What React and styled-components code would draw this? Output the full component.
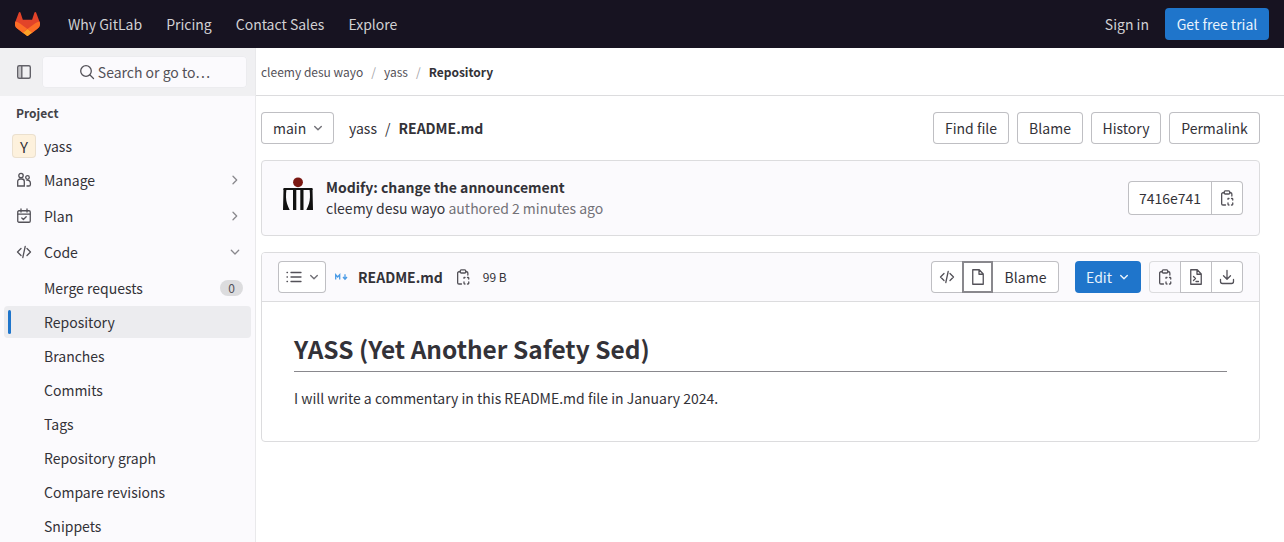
import React from "react";
import styled, { createGlobalStyle } from "styled-components";

const Global = createGlobalStyle`
  html, body { margin: 0; padding: 0; height: 100%; overflow: hidden; background: #fff; }
  * { box-sizing: border-box; }
  body { font-family: "Noto Sans CJK JP", "Noto Sans", sans-serif; font-size: 14px; color: #333238; }
`;

const Page = styled.div`
  width: 1284px; height: 542px; overflow: hidden; display: flex; flex-direction: column;
`;
const TopBar = styled.header`
  height: 48px; flex: none; background: #171321; display: flex; align-items: center; padding: 0 15px 0 15px;
`;
const Logo = styled.svg`width: 25px; height: 24px; flex: none; margin-right: 16px;`;
const TopLink = styled.a`
  color: #d1d0d3; font-size: 14px; padding: 0 12px; line-height: 47px; white-space: nowrap;
`;
const SignIn = styled(TopLink)`padding: 0 4px 0 0;`;
const Spacer = styled.div`flex: 1;`;
const Trial = styled.a`
  height: 32px; width: 104px; margin-left: 12px; background: #1f75cb; color: #e9f3fc; border-radius: 4px; font-size: 14px;
  display: flex; align-items: center; justify-content: center; padding-bottom: 1px;
`;
const Body = styled.div`flex: 1; display: flex; min-height: 0;`;
const Sidebar = styled.aside`
  width: 256px; flex: none; background: #fbfafd; border-right: 1px solid #e9e9eb; display: flex; flex-direction: column;
`;
const SideTop = styled.div`
  height: 48px; flex: none; background: #f0f0f2; display: flex; align-items: center; padding: 0 8px 0 16px; gap: 10px;
`;
const SideToggle = styled.svg`width: 16px; height: 16px; color: #626168; flex: none;`;
const Search = styled.div`
  width: 205px; height: 32px; background: #fbfafd; border-radius: 4px; box-shadow: inset 0 0 0 1px #ececef; display: flex; align-items: center; justify-content: center; gap: 3px;
  font-size: 14px; color: #535158; padding-bottom: 1px;
`;
const Nav = styled.nav`flex: 1; display: flex; flex-direction: column; padding: 8px 4px 0;`;
const NavTitle = styled.div`
  font-size: 12px; font-weight: 700; color: #434248; padding-left: 12px; height: 20px; line-height: 18px; margin-bottom: 5px;
`;
const NavRow = styled.div`
  position: relative; height: 32px; flex: none; display: flex; align-items: center; padding: 0 8px 1px 40px; font-size: 14px; color: #333238;
  border-radius: 4px; margin-top: ${p => p.$gap || 2}px;
  background: ${p => p.$active ? "#ececef" : "transparent"};
  ${p => p.$active && `&::before { content: ""; position: absolute; left: 4px; top: 4px; bottom: 4px; width: 3px; background: #1f75cb; border-radius: 2px; }`}
`;
const NavIcon = styled.svg`position: absolute; left: 12px; top: 8px; width: 16px; height: 16px; color: #535158;`;
const AvatarY = styled.span`
  position: absolute; left: 8px; top: 4px; width: 24px; height: 24px; background: #fdf1dd; border-radius: 4px; box-shadow: inset 0 0 0 1px rgba(31,30,36,.08);
  display: flex; align-items: center; justify-content: center; font-size: 15px; color: #333238;
`;
const Chevron = styled.svg`margin-left: auto; width: 16px; height: 16px; color: #89888d; flex: none; stroke-width: 1.3;`;
const Caret = styled.svg`width: 12px; height: 12px; color: ${p => p.$c || "#737278"}; flex: none;`;
const Count = styled.span`
  margin-left: auto; width: 23px; height: 16px; background: #dcdcde; border-radius: 8px; display: flex; align-items: center; justify-content: center; font-size: 12px; color: #535158;
`;
const Main = styled.main`flex: 1; min-width: 0; display: flex; flex-direction: column;`;
const Crumbs = styled.div`
  height: 48px; flex: none; border-bottom: 1px solid #dcdcde; display: flex; align-items: center; padding-left: 5px; font-size: 12px; color: #535158;
`;
const Sep = styled.span`color: #a4a3a8; margin: 0 8px;`;
const CrumbNow = styled.b`color: #333238; font-weight: 700;`;
const Content = styled.div`padding: 16px 24px 0 5px; display: flex; flex-direction: column;`;
const Toolbar = styled.div`display: flex; align-items: center; height: 32px; margin-bottom: 16px;`;
const Btn = styled.button`
  height: 32px; width: ${p => p.$w ? `${p.$w}px` : "auto"}; padding: 0 0 1px; background: #fff; border: 0; border-radius: 4px; box-shadow: inset 0 0 0 1px #bfbfc3;
  font: inherit; font-size: 14px; color: #333238; display: flex; align-items: center; justify-content: center; white-space: nowrap; gap: 4px;
`;
const BranchBtn = styled(Btn)`width: 73px; gap: 6px; padding-left: 12px; justify-content: flex-start;`;
const BtnRow = styled.div`margin-left: auto; display: flex; gap: 8px;`;
const Path = styled.div`margin-left: 15px; font-size: 14px; display: flex; gap: 8px; color: #333238; padding-bottom: 1px;`;
const Bold = styled.b`font-weight: 700;`;
const CommitCard = styled.section`
  height: 76px; background: #fbfafd; border: 1px solid #dcdcde; border-radius: 4px; display: flex; align-items: center; padding: 0 16px 0 20px; margin-bottom: 16px;
`;
const Avatar = styled.svg`width: 32px; height: 36px; flex: none; margin-right: 12px; overflow: visible;`;
const CommitText = styled.div`display: flex; flex-direction: column; font-size: 14px; line-height: 21px;`;
const Muted = styled.span`color: #737278;`;
const Group = styled.div`margin-left: ${p => p.$ml || "0"}; display: flex; height: ${p => p.$h || 32}px;`;
const GroupBtn = styled.button`
  width: ${p => p.$w}px; height: 100%; padding: 0 0 1px; margin-left: -1px; border: 0; font: inherit; font-size: 14px; color: #333238;
  display: flex; align-items: center; justify-content: center;
  background: ${p => p.$soft ? "#fbfafd" : "#fff"};
  box-shadow: inset 0 0 0 ${p => p.$on ? 2 : 1}px ${p => p.$on ? "#89888d" : p.$soft ? "#dcdcde" : "#bfbfc3"};
  position: relative; z-index: ${p => p.$on ? 1 : 0};
  &:first-child { margin-left: 0; border-radius: 4px 0 0 4px; }
  &:last-child { border-radius: 0 4px 4px 0; }
`;
const Icon = styled.svg`width: 16px; height: 16px; color: #535158; flex: none;`;
const FileCard = styled.section`border: 1px solid #dcdcde; border-radius: 4px; overflow: hidden;`;
const FileHead = styled.div`
  height: 49px; background: #fbfafd; border-bottom: 1px solid #dcdcde; display: flex; align-items: center; padding: 0 16px;
`;
const TocBtn = styled(Btn)`width: 48px; padding: 0 0 0 8px; gap: 6px; margin-right: 9px; justify-content: flex-start;`;
const MdIcon = styled.svg`width: 13px; height: 8px; flex: none; margin-right: 10px;`;
const FileName = styled.b`font-size: 14px; font-weight: 700; margin-right: 12px; padding-bottom: 1px;`;
const Size = styled.span`font-size: 12px; margin-left: 12px; color: #333238; padding-bottom: 1px;`;
const Edit = styled.button`
  width: 66px; height: 32px; margin-left: 16px; border: 0; border-radius: 4px; background: #1f75cb; color: #e9f3fc; font: inherit; font-size: 14px;
  display: flex; align-items: center; justify-content: center; gap: 6px; padding: 0 0 1px;
`;
const Markdown = styled.article`padding: 32px 32px 24px; height: 139px;`;
const Title = styled.h1`
  margin: 0 0 16px; font-size: 24.45px; line-height: 30px; font-weight: 700; color: #333238; border-bottom: 1px solid #89888d; height: 38px;
`;
const Para = styled.p`margin: 0; font-size: 14px; line-height: 21px; color: #333238;`;

const Right = () => <Chevron viewBox="0 0 16 16" fill="none" stroke="currentColor" strokeLinecap="round" strokeLinejoin="round"><path d="M6 4.300l3.700 3.700L6 11.700"/></Chevron>;
const Open = () => <Chevron viewBox="0 0 16 16" fill="none" stroke="currentColor" strokeLinecap="round" strokeLinejoin="round"><path d="M4.300 6.300L8 10l3.700-3.700"/></Chevron>;
const Down = ({ c }) => <Caret $c={c} viewBox="0 0 12 12" fill="none" stroke="currentColor" strokeWidth="1.4" strokeLinecap="round" strokeLinejoin="round"><path d="M2.700 4.500L6 7.800l3.300-3.300"/></Caret>;
const CodeGlyph = () => <path d="M5 4.500L1.500 8 5 11.500M11 4.500L14.500 8 11 11.500M9.200 2.500l-2.400 11"/>;
const Clip = () => (
  <Icon viewBox="0 0 16 16" fill="none" stroke="currentColor" strokeWidth="1.3" strokeLinecap="round" strokeLinejoin="round">
    <path d="M5 2.750H3.900A1.250 1.250 0 0 0 2.650 4v9.750A1.250 1.250 0 0 0 3.900 15h2.600M11 2.750h.6A1.250 1.250 0 0 1 12.850 4v2"/>
    <rect x="5.250" y=".8" width="5.500" height="3.200" rx="1"/>
    <path d="M9 9.250V8.500h1M12.500 8.500h.5a.750.750 0 0 1 .750.750v.750M13.750 13v1.250a.750.750 0 0 1-.750.750h-.500M10 15h-.250a.750.750 0 0 1-.750-.750V13"/>
  </Icon>
);

export default function App() {
  return (
    <Page>
      <Global/>
      <TopBar>
        <Logo viewBox="0 0 25 24">
          <path d="m24.507 9.5-.034-.09L21.082.562a.896.896 0 0 0-1.694.091l-2.29 7.01H7.825L5.535.653a.898.898 0 0 0-1.694-.09L.451 9.411.416 9.5a6.297 6.297 0 0 0 2.09 7.278l.012.01.03.022 5.16 3.867 2.56 1.935 1.554 1.176a1.051 1.051 0 0 0 1.268 0l1.555-1.176 2.56-1.935 5.197-3.89.014-.01A6.297 6.297 0 0 0 24.507 9.5Z" fill="#E24329"/>
          <path d="m24.507 9.5-.034-.09a11.44 11.44 0 0 0-4.56 2.051l-7.447 5.632 4.742 3.584 5.197-3.89.014-.01A6.297 6.297 0 0 0 24.507 9.5Z" fill="#FC6D26"/>
          <path d="m7.707 20.677 2.56 1.935 1.555 1.176a1.051 1.051 0 0 0 1.268 0l1.555-1.176 2.56-1.935-4.743-3.584-4.755 3.584Z" fill="#FCA326"/>
          <path d="M5.01 11.461a11.43 11.43 0 0 0-4.56-2.05l-.034.088a6.297 6.297 0 0 0 2.09 7.278l.012.01.03.022 5.16 3.867 4.745-3.584-7.444-5.632Z" fill="#FC6D26"/>
        </Logo>
        <TopLink>Why GitLab</TopLink>
        <TopLink>Pricing</TopLink>
        <TopLink>Contact Sales</TopLink>
        <TopLink>Explore</TopLink>
        <Spacer/>
        <SignIn>Sign in</SignIn>
        <Trial>Get free trial</Trial>
      </TopBar>
      <Body>
        <Sidebar>
          <SideTop>
            <SideToggle viewBox="0 0 16 16" fill="none" stroke="currentColor" strokeWidth="1.4">
              <path d="M4 2.500v11" strokeWidth="3" opacity=".3"/>
              <rect x="1.700" y="1.700" width="12.600" height="12.600" rx="1.500"/><path d="M5.800 2v12"/>
            </SideToggle>
            <Search>
              <Icon viewBox="0 0 16 16" fill="none" stroke="currentColor" strokeWidth="1.3" strokeLinecap="round"><circle cx="7" cy="7" r="5.300"/><path d="M11 11l3.500 3.500"/></Icon>
              Search or go to…
            </Search>
          </SideTop>
          <Nav>
            <NavTitle>Project</NavTitle>
            <NavRow $gap={1}><AvatarY>Y</AvatarY>yass</NavRow>
            <NavRow>
              <NavIcon viewBox="0 0 16 16" fill="none" stroke="currentColor" strokeWidth="1.3"><circle cx="5" cy="3.500" r="2.200"/><path d="M1.700 14V9.500A2.500 2.500 0 0 1 4.200 7h1.600a2.500 2.500 0 0 1 2.500 2.500V14z"/><circle cx="11.500" cy="5.500" r="1.800"/><path d="M10.500 14h2.300a1.600 1.600 0 0 0 1.600-1.600V11a2.800 2.800 0 0 0-4-2.500"/></NavIcon>
              Manage<Right/>
            </NavRow>
            <NavRow $gap={4}>
              <NavIcon viewBox="0 0 16 16" fill="none" stroke="currentColor" strokeWidth="1.3" strokeLinecap="round" strokeLinejoin="round"><rect x="1.750" y="2.750" width="12.500" height="11.500" rx="1.200"/><path d="M5 1v3M11 1v3M2 6.200h12M5.800 10l1.600 1.500 2.800-2.800"/></NavIcon>
              Plan<Right/>
            </NavRow>
            <NavRow $gap={4}>
              <NavIcon viewBox="0 0 16 16" fill="none" stroke="currentColor" strokeWidth="1.3" strokeLinecap="round" strokeLinejoin="round"><CodeGlyph/></NavIcon>
              Code<Open/>
            </NavRow>
            <NavRow $gap={4}>Merge requests<Count>0</Count></NavRow>
            <NavRow $active>Repository</NavRow>
            <NavRow>Branches</NavRow>
            <NavRow>Commits</NavRow>
            <NavRow>Tags</NavRow>
            <NavRow>Repository graph</NavRow>
            <NavRow>Compare revisions</NavRow>
            <NavRow>Snippets</NavRow>
          </Nav>
        </Sidebar>
        <Main>
          <Crumbs>
            cleemy desu wayo<Sep>/</Sep>yass<Sep>/</Sep><CrumbNow>Repository</CrumbNow>
          </Crumbs>
          <Content>
            <Toolbar>
              <BranchBtn>main <Down/></BranchBtn>
              <Path>yass <span>/</span> <Bold>README.md</Bold></Path>
              <BtnRow>
                <Btn $w={76}>Find file</Btn>
                <Btn $w={66}>Blame</Btn>
                <Btn $w={70}>History</Btn>
                <Btn $w={91}>Permalink</Btn>
              </BtnRow>
            </Toolbar>
            <CommitCard>
              <Avatar viewBox="0 0 32 36">
                <circle cx="16" cy="2.300" r="4.900" fill="#7a1712"/>
                <path d="M1.500 8h29v2h-29z" fill="#111"/>
                <path d="M1.500 9h3c-.8 6-.6 11 .5 14.500.7 2.400 1.600 4.300 2.700 6.500H1z" fill="#111"/>
                <path d="M30.500 9h-3c.8 6 .6 11-.5 14.500-.7 2.400-1.600 4.300-2.700 6.500H31z" fill="#111"/>
                <path d="M11 10h3.300v20H11zM18.300 10h3.200v20h-3.200z" fill="#111"/>
              </Avatar>
              <CommitText>
                <Bold>Modify: change the announcement</Bold>
                <span>cleemy desu wayo <Muted>authored 2 minutes ago</Muted></span>
              </CommitText>
              <Group $ml="auto" $h={34}>
                <GroupBtn $w={84}>7416e741</GroupBtn>
                <GroupBtn $w={32}><Clip/></GroupBtn>
              </Group>
            </CommitCard>
            <FileCard>
              <FileHead>
                <TocBtn>
                  <Icon viewBox="0 0 16 16" fill="none" stroke="currentColor" strokeWidth="1.3" strokeLinecap="round"><path d="M5 3.500h10M5 8h10M5 12.500h10M1 3.500h.5M1 8h.5M1 12.500h.5"/></Icon>
                  <Down/>
                </TocBtn>
                <MdIcon viewBox="0 0 13 8" fill="none" stroke="#4a9be6" strokeWidth="1.300"><path d="M.7 6.500V1.800l2 2.200 2-2.200v4.700"/><path d="M10 1.300v4.700M8 4l2 2.200L12 4"/></MdIcon>
                <FileName>README.md</FileName>
                <Clip/>
                <Size>99 B</Size>
                <Group $ml="auto">
                  <GroupBtn $w={32}><Icon viewBox="0 0 16 16" fill="none" stroke="currentColor" strokeWidth="1.3" strokeLinecap="round" strokeLinejoin="round"><CodeGlyph/></Icon></GroupBtn>
                  <GroupBtn $w={31} $on><Icon viewBox="0 0 16 16" fill="none" stroke="currentColor" strokeWidth="1.3" strokeLinejoin="round"><path d="M2.750.750h6.500L13.250 5v10.250H2.750zM9 1v4.250h4"/></Icon></GroupBtn>
                  <GroupBtn $w={67}>Blame</GroupBtn>
                </Group>
                <Edit>Edit <Down c="#e9f3fc"/></Edit>
                <Group $ml="8px">
                  <GroupBtn $w={32} $soft><Clip/></GroupBtn>
                  <GroupBtn $w={32}><Icon viewBox="0 0 16 16" fill="none" stroke="currentColor" strokeWidth="1.3" strokeLinejoin="round" strokeLinecap="round"><path d="M2.750.750h6.500L13.250 5v10.250H2.750zM9 1v4.250h4M5.500 7.500l2 2-2 2M8 12.500h2.500"/></Icon></GroupBtn>
                  <GroupBtn $w={32}><Icon viewBox="0 0 16 16" fill="none" stroke="currentColor" strokeWidth="1.3" strokeLinejoin="round" strokeLinecap="round"><path d="M8 1.500V10M4.500 6.700L8 10.200l3.500-3.500M1.500 10.500v2a2 2 0 0 0 2 2h9a2 2 0 0 0 2-2v-2"/></Icon></GroupBtn>
                </Group>
              </FileHead>
              <Markdown>
                <Title>YASS (Yet Another Safety Sed)</Title>
                <Para>I will write a commentary in this README.md file in January 2024.</Para>
              </Markdown>
            </FileCard>
          </Content>
        </Main>
      </Body>
    </Page>
  );
}
